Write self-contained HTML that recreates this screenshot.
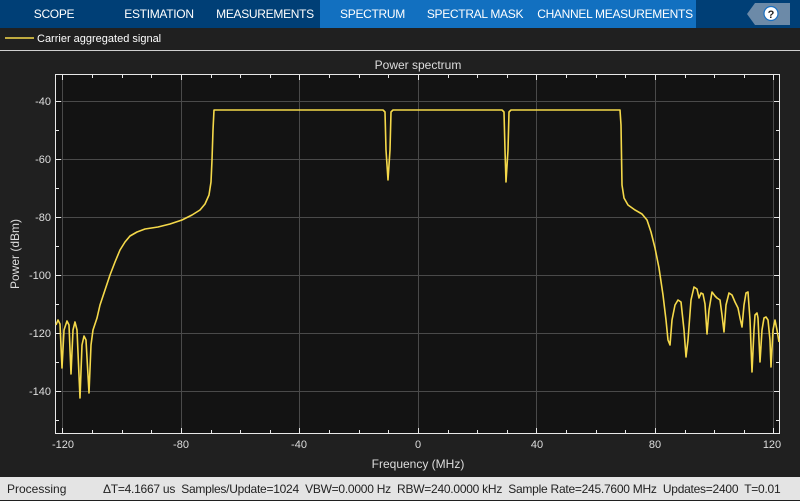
<!DOCTYPE html>
<html><head><meta charset="utf-8"><style>
body{margin:0;width:800px;height:500px;overflow:hidden;background:#202020;font-family:"Liberation Sans",sans-serif;position:relative}
.tabs{position:absolute;left:0;top:0;width:800px;height:28px;background:#003f76}
.tab{position:absolute;top:0;height:28px;line-height:29px;color:#fff;font-size:12px;text-align:center;white-space:nowrap;letter-spacing:-0.3px}
.status{position:absolute;left:0;top:477px;width:800px;height:23px;background:#e4e4e4;color:#222;font-size:12px;line-height:24px;white-space:nowrap}
</style></head><body>
<div class="tabs">
<div class="tab" style="left:320px;width:376px;background:#1270c0"></div>
<div class="tab" style="left:20px;width:68px">SCOPE</div>
<div class="tab" style="left:115px;width:88px">ESTIMATION</div>
<div class="tab" style="left:215px;width:100px">MEASUREMENTS</div>
<div class="tab" style="left:325px;width:95px">SPECTRUM</div>
<div class="tab" style="left:425px;width:100px">SPECTRAL MASK</div>
<div class="tab" style="left:535px;width:160px">CHANNEL MEASUREMENTS</div>
</div>
<svg width="800" height="500" style="position:absolute;left:0;top:0">
<polygon points="755,3 790,3 790,25 755,25 747,14" fill="#6c8aa8"/>
<circle cx="771" cy="13.5" r="7" fill="#fff" stroke="#1a6fc0" stroke-width="1.2"/>
<text x="771" y="18" font-size="11" font-weight="bold" text-anchor="middle" fill="#222" font-family="Liberation Sans">?</text>
<line x1="5" y1="38" x2="34" y2="38" stroke="#f5d94a" stroke-width="1.5"/>
<text x="37" y="42" font-size="11" fill="#fff" font-family="Liberation Sans">Carrier aggregated signal</text>
<line x1="0" y1="50.5" x2="800" y2="50.5" stroke="#cfcfcf" stroke-width="1"/>
<text x="418" y="69" font-size="12" fill="#ddd" text-anchor="middle" font-family="Liberation Sans">Power spectrum</text>
<rect x="55.5" y="74.5" width="724" height="359" fill="#131313" stroke="#e8e8e8" stroke-width="1"/>
<g stroke="#4a4a4a" stroke-width="1">
<line x1="62.5" y1="75" x2="62.5" y2="433"/><line x1="181.5" y1="75" x2="181.5" y2="433"/><line x1="299.5" y1="75" x2="299.5" y2="433"/><line x1="418.5" y1="75" x2="418.5" y2="433"/><line x1="536.5" y1="75" x2="536.5" y2="433"/><line x1="655.5" y1="75" x2="655.5" y2="433"/><line x1="773.5" y1="75" x2="773.5" y2="433"/>
<line x1="56" y1="101.5" x2="779" y2="101.5"/><line x1="56" y1="159.5" x2="779" y2="159.5"/><line x1="56" y1="217.5" x2="779" y2="217.5"/><line x1="56" y1="275.5" x2="779" y2="275.5"/><line x1="56" y1="333.5" x2="779" y2="333.5"/><line x1="56" y1="391.5" x2="779" y2="391.5"/>
</g>
<g stroke="#e8e8e8" stroke-width="1">
<path d="M62.5 75v5M92.5 75v3M122.5 75v3M151.5 75v3M181.5 75v5M211.5 75v3M240.5 75v3M270.5 75v3M299.5 75v5M329.5 75v3M359.5 75v3M388.5 75v3M418.5 75v5M448.5 75v3M477.5 75v3M507.5 75v3M536.5 75v5M566.5 75v3M596.5 75v3M625.5 75v3M655.5 75v5M685.5 75v3M714.5 75v3M744.5 75v3M773.5 75v5"/>
<path d="M62.5 433v-5M92.5 433v-3M122.5 433v-3M151.5 433v-3M181.5 433v-5M211.5 433v-3M240.5 433v-3M270.5 433v-3M299.5 433v-5M329.5 433v-3M359.5 433v-3M388.5 433v-3M418.5 433v-5M448.5 433v-3M477.5 433v-3M507.5 433v-3M536.5 433v-5M566.5 433v-3M596.5 433v-3M625.5 433v-3M655.5 433v-5M685.5 433v-3M714.5 433v-3M744.5 433v-3M773.5 433v-5"/>
<path d="M56 101.5h5M56 130.5h3M56 159.5h5M56 188.5h3M56 217.5h5M56 246.5h3M56 275.5h5M56 304.5h3M56 333.5h5M56 362.5h3M56 391.5h5M56 420.5h3"/>
<path d="M779 101.5h-5M779 130.5h-3M779 159.5h-5M779 188.5h-3M779 217.5h-5M779 246.5h-3M779 275.5h-5M779 304.5h-3M779 333.5h-5M779 362.5h-3M779 391.5h-5M779 420.5h-3"/>
</g>
<g font-size="11" fill="#ddd" font-family="Liberation Sans" text-anchor="end">
<text x="51" y="105">-40</text><text x="51" y="163">-60</text><text x="51" y="221">-80</text><text x="51" y="279">-100</text><text x="51" y="337">-120</text><text x="51" y="395">-140</text>
</g>
<g font-size="11" fill="#ddd" font-family="Liberation Sans" text-anchor="middle">
<text x="63" y="448">-120</text><text x="181" y="448">-80</text><text x="299" y="448">-40</text><text x="418" y="448">0</text><text x="537" y="448">40</text><text x="655" y="448">80</text><text x="772" y="448">120</text>
</g>
<text x="418" y="468" font-size="12" fill="#ddd" text-anchor="middle" font-family="Liberation Sans">Frequency (MHz)</text>
<text transform="translate(19,254) rotate(-90)" font-size="12" fill="#ddd" text-anchor="middle" font-family="Liberation Sans">Power (dBm)</text>
<polyline fill="none" stroke="#f5d94a" stroke-width="1.6" stroke-linejoin="round" points="56,325 58,320 60,324 62,368 64,330 67,321 69,325 71,374 73,330 75,322 77,330 80,398 82,345 84,336 86,340 89,393 91,345 93,330 97,318 100,305 105,290 110,275 115,262 120,250 125,242 130,236 137,232 145,229 158,227 170,224 182,220 192,215 200,210 205,204 209,195 211,182 212,160 213,130 214,110 383,110 385,112 386,150 388,180 390,150 391,112 393,110 502,110 504,112 505,150 506,182 508,150 509,112 511,110 620,110 621,125 622,185 624,198 628,205 635,210 642,214 647,220 651,232 655,248 659,268 663,295 666,320 668,340 670,345 672,320 675,305 678,300 681,302 684,330 686,357 688,340 691,300 694,287 697,289 699,298 701,293 703,294 705,304 707,334 709,310 712,292 715,296 717,298 720,300 722,315 724,332 726,305 729,293 732,295 735,302 738,308 740,318 742,327 744,305 746,293 748,292 750,320 752,372 754,330 755,315 757,313 758,318 760,362 762,330 764,318 766,317 768,320 770,340 771,367 773,330 775,320 777,330 779,342"/>
</svg>
<div class="status"><span style="position:absolute;left:7px">Processing</span><span style="position:absolute;left:103px;letter-spacing:-0.25px">ΔT=4.1667 us&nbsp; Samples/Update=1024&nbsp; VBW=0.0000 Hz&nbsp; RBW=240.0000 kHz&nbsp; Sample Rate=245.7600 MHz&nbsp; Updates=2400&nbsp; T=0.01</span></div>
</body></html>
